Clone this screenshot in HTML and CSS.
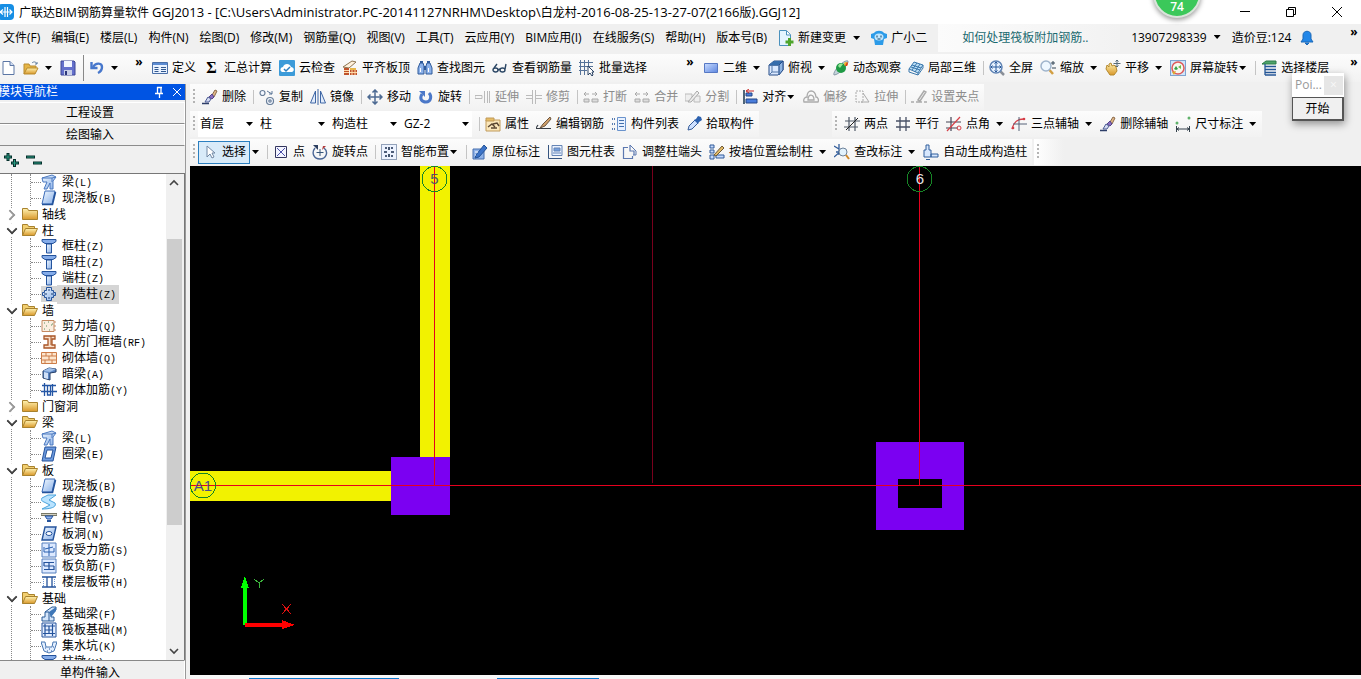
FILE: index.html
```html
<!DOCTYPE html>
<html lang="zh-CN">
<head>
<meta charset="utf-8">
<title>广联达BIM钢筋算量软件 GGJ2013</title>
<link rel="stylesheet" href="styles.css">
</head>
<body>
<svg class="defs" aria-hidden="true">
<defs>
<linearGradient id="gold" x1="0" y1="0" x2="0" y2="1"><stop offset="0" stop-color="#fff2b0"/><stop offset="1" stop-color="#d9982a"/></linearGradient>
<linearGradient id="blue" x1="0" y1="0" x2="1" y2="1"><stop offset="0" stop-color="#f4faff"/><stop offset="1" stop-color="#86aee8"/></linearGradient>
<linearGradient id="deep" x1="0" y1="0" x2="1" y2="1"><stop offset="0" stop-color="#c9dcff"/><stop offset="1" stop-color="#5d86e0"/></linearGradient>
</defs>
<symbol id="logo" viewBox="0 0 16 16"><rect width="16" height="16" rx="4" fill="#168ee4"/><path d="M7 3v10M9.500 3v10M2 8h12M5 5.500L2 8l3 2.500M11.500 5.500L14 8l-2.500 2.500" fill="none" stroke="#fff" stroke-width="1.200"/></symbol>
<symbol id="new" viewBox="0 0 16 16"><path d="M3 1.500h7l4 4v9H3z" fill="#fff" stroke="#5b76a5"/><path d="M10 1.500v4h4" fill="#cfdcf2" stroke="#5b76a5"/></symbol>
<symbol id="open" viewBox="0 0 16 16"><path d="M1 14V4h5l1 2h6v3" fill="#e6b545" stroke="#b98b2e"/><path d="M1 14l3-6h11l-3 6z" fill="url(#gold)" stroke="#b98b2e"/><path d="M9 3c2-2 4-1 5 1m0-2v2h-2" fill="none" stroke="#5f7c9c"/></symbol>
<symbol id="save" viewBox="0 0 16 16"><path d="M1 1h13l1 1v13H1z" fill="#6470cc" stroke="#3d4796"/><path d="M4 1h8v6H4z" fill="#f2f5ff"/><path d="M4 10h8v5H4z" fill="#c8cfe8"/><path d="M5 11h2v4H5z" fill="#2c367c"/></symbol>
<symbol id="undo" viewBox="0 0 16 16"><path d="M2.500 2v6h6" fill="none" stroke="#4777cc" stroke-width="2.400"/><path d="M4 7c3-5 9-4 9 0 0 3-2 5-4 6" fill="none" stroke="#4777cc" stroke-width="2.400"/></symbol>
<symbol id="define" viewBox="0 0 16 16"><path d="M.5 2.500h15v11H.5z" fill="#e9f2ff" stroke="#4a6fa8"/><path d="M1 3h14v2H1z" fill="#5b8bd2"/><path d="M2.500 7.500h4m-4 2h4m-4 2h4M9 7.500h5m-5 2h5m-5 2h5" stroke="#31588f"/></symbol>
<symbol id="cloud" viewBox="0 0 16 16"><rect width="16" height="16" rx="1" fill="#3c9bd9"/><path d="M3 12c-3-2-1-5 1-5 1-4 7-4 8 0 3 0 4 4 1 5z" fill="#fff"/><path d="M5 9l2 2 4-4" fill="none" stroke="#2b7fc0" stroke-width="1.500"/></symbol>
<symbol id="flat" viewBox="0 0 16 16"><path d="M1 7l9-6 4 1-7 6z" fill="#fff1dc" stroke="#8c7350"/><path d="M2 8h5v7H2zM8 10h7v5H8z" fill="#c0522c"/><path d="M8 8h6v2H8z" fill="#e8b64a"/><path d="M2 10.500h5m-5 2h5m1 0h7M10 10v5m3-5v5" stroke="#ffd9a8"/></symbol>
<symbol id="find" viewBox="0 0 16 16"><path d="M3 3h3l1 3v8H1V8zM10 3h3l2 5v6H9V6z" fill="#8db2ea" stroke="#2f5a9a"/><path d="M3 1h3v2H3zm7 0h3v2h-3zM7 6h2v4H7z" fill="#2f5a9a"/><path d="M3.500 8v4m8-4v4" stroke="#fff"/></symbol>
<symbol id="glasses" viewBox="0 0 16 16"><g fill="none" stroke="#2c4765" stroke-width="1.400"><ellipse cx="3.500" cy="10" rx="2.500" ry="2"/><ellipse cx="10.500" cy="10" rx="2.500" ry="2"/><path d="M6 10l2-1M2 8l3-4m8 5l1-5"/></g></symbol>
<symbol id="batch" viewBox="0 0 16 16"><path d="M1.500 0v15M5.500 0v15M9.500 0v9M0 2.500h14M0 6.500h14M0 10.500h8" stroke="#577399"/><path d="M9 6v9l2-2 2 3 1-1-1-3h2z" fill="#fff" stroke="#2b4365"/></symbol>
<symbol id="rect" viewBox="0 0 16 16"><path d="M1.500 3.500h13v9h-13z" fill="url(#deep)" stroke="#5678c4"/></symbol>
<symbol id="cube" viewBox="0 0 16 16"><path d="M1 5l5-4h9v9l-5 5H1z" fill="#dbe9ff" stroke="#244b87"/><path d="M1 5l5-4h9l-4 4z" fill="#366dac"/><path d="M11 5l4-4v9l-4 5z" fill="#8fb4e2" stroke="#244b87"/><path d="M1 5.500h10V15M4 6v6h7M4 12l-3 3" fill="none" stroke="#5377a8"/></symbol>
<symbol id="orbit" viewBox="0 0 16 16"><path d="M1 15C-1 12 11-1 15 1c1 3-9 14-14 14z" fill="#c4d4dc" stroke="#8a9ba8"/><circle cx="8" cy="8" r="5" fill="#1f9a45"/><path d="M5 6c1-3 4-3 5-2L7 8z" fill="#9be79a"/><circle cx="13" cy="4" r="2" fill="#f0b428"/><path d="M12 6l2-4 1 1-1 3z" fill="#d53c26"/></symbol>
<symbol id="part3d" viewBox="0 0 16 16"><path d="M1 9l5-7 9 3-5 8z" fill="#b9dcf4" stroke="#3a78ad"/><path d="M4 5l9 3M3 7l9 3M9 3l-5 7m8-6l-5 8M1 9v3l9 3v-2m0 2l5-7V5" fill="none" stroke="#3a78ad"/></symbol>
<symbol id="full" viewBox="0 0 16 16"><path d="M11.500 11.500L15 15" stroke="#8a8f98" stroke-width="2.500"/><circle cx="7" cy="7" r="6" fill="#eaf4ff" stroke="#5f83b4" stroke-width="1.500"/><path d="M7 2v10M2 7h10M5.500 3.500L7 2l1.500 1.500m-3 7L7 12l1.500-1.500m-5-5L2 7l1.500 1.500m7-3L12 7l-1.500 1.500" fill="none" stroke="#27589b"/></symbol>
<symbol id="zoom" viewBox="0 0 16 16"><path d="M9.500 10L13 14" stroke="#d29f43" stroke-width="2.500"/><circle cx="6" cy="6" r="5" fill="#eef7ff" stroke="#9fb4cc" stroke-width="1.500"/><path d="M13 1v4m-2-2h4m-3 5h4" stroke="#345"/></symbol>
<symbol id="pan" viewBox="0 0 16 16"><path d="M1 9l1-4 2 2V4l2-1 1 3 2-1 2 2 1 4-3 4H5z" fill="url(#gold)" stroke="#b58a30"/><path d="M12 0v7M8.500 3.500h7M10.500 1.500L12 0l1.500 1.500m-3 4L12 7l1.500-1.500" fill="none" stroke="#566b78"/></symbol>
<symbol id="screen" viewBox="0 0 16 16"><rect x=".5" y=".5" width="15" height="15" fill="#cfe6fa" stroke="#7fa3cf"/><circle cx="8" cy="8" r="6" fill="#f7f7ef" stroke="#e05a5a" stroke-width="1.500"/><path d="M4 9l2-3 2 3-2 1z" fill="#36a34a"/><path d="M8 7l3-2v4z" fill="#6bbf4a"/><path d="M2 12l4-1-2 4z" fill="#e0a828"/></symbol>
<symbol id="floors" viewBox="0 0 16 16"><path d="M1 4l4-3h10v3z" fill="#4ea36a" stroke="#2a7a4a"/><path d="M4 6.500h11M4 9.500h11M4 12.500h11M4 15h11M4 4v11" fill="none" stroke="#245696" stroke-width="1.300"/></symbol>
<symbol id="brush" viewBox="0 0 16 16"><path d="M0 14.500h7" stroke="#2d3e68" stroke-width="1.500"/><path d="M10 6l3-5 2 1-3 6z" fill="#e2b888" stroke="#8a6a4a"/><path d="M7 8l3-3 2 3-2 2z" fill="#8a6fc0" stroke="#54448a"/><path d="M3 13l3-5 3 2-2 3z" fill="#d4daf2" stroke="#4c5d94"/></symbol>
<symbol id="copy" viewBox="0 0 16 16"><g fill="#f4f8ff" stroke="#6a7f9a" stroke-width="1.200"><circle cx="3.500" cy="4" r="2.500"/><circle cx="11" cy="12" r="3.500"/><circle cx="11" cy="12" r="1.200"/></g><path d="M8 2l5 3m0-3v3h-3" fill="none" stroke="#5f7899"/></symbol>
<symbol id="mirror" viewBox="0 0 16 16"><path d="M5.500 2v12h-5zM10.500 2v12h5z" fill="#e2ecfb" stroke="#3f67a5"/><path d="M8 0v16" stroke="#3f67a5"/></symbol>
<symbol id="move" viewBox="0 0 16 16"><path d="M8 1v14M1 8h14M5.500 3.500L8 1l2.500 2.500m-5 9L8 15l2.500-2.500m-7-7L1 8l2.500 2.500m9-5L15 8l-2.500 2.500" fill="none" stroke="#4d6a92" stroke-width="1.500"/></symbol>
<symbol id="rotate" viewBox="0 0 16 16"><path d="M4 5c-3 5 0 8 4 8 5 0 6-6 3-9" fill="none" stroke="#4b78c8" stroke-width="3"/><path d="M1 2h6v6z" fill="#4b78c8"/></symbol>
<symbol id="extend" viewBox="0 0 16 16"><path d="M0 6.500h7v3H0zM9.500 2v12m3-12v12M14.500 2v12" fill="none" stroke="#bbb"/></symbol>
<symbol id="trim" viewBox="0 0 16 16"><path d="M0 6.500h6m4 0h6M0 9.500h6m4 0h6M6.500 1v14M9.500 1v14" stroke="#bbb"/></symbol>
<symbol id="split" viewBox="0 0 16 16"><path d="M1 10h5v3H1zm8 0h6v3H9z" fill="#ddd" stroke="#aaa"/><path d="M1 5h5M9 5h5M3 3L1 5l2 2m9-4l2 2-2 2" fill="none" stroke="#aaa"/></symbol>
<symbol id="cut" viewBox="0 0 16 16"><path d="M0 5h7v7H0zm9 2h6v6H9z" fill="#eee" stroke="#bbb"/><path d="M3 13l9-11 2 2-8 9z" fill="#eee" stroke="#aaa"/></symbol>
<symbol id="align" viewBox="0 0 16 16"><path d="M2 1v14" stroke="#18344e" stroke-width="1.500"/><path d="M4 4h6v3H4zM4 10h11v4H4z" fill="#4a7ddb" stroke="#244786"/><path d="M5 2h7M7 0L4 2l3 2" fill="none" stroke="#c72929"/></symbol>
<symbol id="offset" viewBox="0 0 16 16"><path d="M1 13c-1-3 1-5 3-5 0-8 8-8 9 0 2 0 3 3 2 5zM5 11c0-7 6-6 6 0z" fill="none" stroke="#aaa" stroke-width="1.300"/></symbol>
<symbol id="stretch" viewBox="0 0 16 16"><path d="M2 2h7v11H2z" fill="none" stroke="#aaa" stroke-dasharray="2 1"/><path d="M7 13h8L9 4" fill="none" stroke="#aaa"/></symbol>
<symbol id="grippt" viewBox="0 0 16 16"><path d="M7 11l6-9 2 1-6 9zM0 13h3m2 0h6m2 0h3" fill="none" stroke="#aaa" stroke-width="1.500"/></symbol>
<symbol id="prop" viewBox="0 0 16 16"><path d="M1 4h14v11H1z" fill="#fae6ba" stroke="#c09a5a"/><path d="M1 2h8v3H1z" fill="#e7bd65" stroke="#c09a5a"/><path d="M3 11l4-3 3 3m-2-3l4-1 2 3M6 12h6" fill="none" stroke="#5a4632" stroke-width="1.400"/></symbol>
<symbol id="rebar" viewBox="0 0 16 16"><path d="M0 12.500h15M0 12l2-3" stroke="#363c45" stroke-width="1.200"/><path d="M4 12l3-4 7-7 1 2-6 7z" fill="#d0a06a" stroke="#6b5540"/></symbol>
<symbol id="list" viewBox="0 0 16 16"><path d="M1 3h3M1 8h3m-3 5h3" stroke="#577bb0" stroke-width="2" stroke-dasharray="1 1"/><path d="M6.500 1.500h8v13h-8z" fill="#e8f1ff" stroke="#6a93cc"/><path d="M8 4.500h5m-5 3h5m-5 3h5" stroke="#4270ad"/></symbol>
<symbol id="pick" viewBox="0 0 16 16"><path d="M2 14l1-4 6-6 3 3-6 6z" fill="#cfe1ff" stroke="#365d9a"/><path d="M8 4l2-1 2-3 3 1 1 3-3 2-1 2z" fill="#2c61af"/></symbol>
<symbol id="twopt" viewBox="0 0 16 16"><path d="M1 5h15M0 11h14M5 1v14M11 1v14" stroke="#4f5967" stroke-width="1.200"/><path d="M2 14L14 2" stroke="#222"/></symbol>
<symbol id="parallel" viewBox="0 0 16 16"><path d="M1 5h14M1 11h14M5 1v14M11 1v14" stroke="#485065" stroke-width="1.300"/></symbol>
<symbol id="angle" viewBox="0 0 16 16"><path d="M0 6h15M0 12h12M5 1v14" stroke="#445" stroke-width="1.200"/><path d="M1 15L14 1" stroke="#d64149" stroke-width="1.200"/><circle cx="13" cy="12" r="2" fill="none" stroke="#d64149"/></symbol>
<symbol id="three" viewBox="0 0 16 16"><path d="M1 13C3 6 6 3 13 3" fill="none" stroke="#d53d46" stroke-width="1.300"/><path d="M8 1v14M2 8h14" stroke="#566279"/><circle cx="13" cy="3" r="1.300" fill="#d53d46"/><circle cx="2" cy="12" r="1.300" fill="#d53d46"/></symbol>
<symbol id="dimension" viewBox="0 0 16 16"><path d="M1.500 10v6m13-6v6M2 13h12M4 11.500L2 13l2 1.500m8-3l2 1.500-2 1.500" fill="none" stroke="#34414c"/><circle cx="2" cy="7" r="1.500" fill="#5fb26a"/><circle cx="14" cy="2" r="1.500" fill="#5fb26a"/></symbol>
<symbol id="cursor" viewBox="0 0 16 16"><path d="M5 2v11l3-3 2 4 2-1-2-4h3z" fill="#fff" stroke="#7087a4"/></symbol>
<symbol id="point" viewBox="0 0 16 16"><path d="M2.500 2.500h11v11h-11z" fill="#f3f4ff" stroke="#34365e"/><path d="M4 4l8 8m0-8l-8 8" stroke="#4a4fa8"/></symbol>
<symbol id="rotpt" viewBox="0 0 16 16"><path d="M3 4c-4 5-1 11 5 11s9-7 4-11" fill="none" stroke="#4a6696" stroke-width="1.400"/><path d="M1 1h5v5z" fill="#2c3f60"/><path d="M8 5v7M4.500 8.500h7" stroke="#365579"/><path d="M10 6l1-4h3z" fill="#b03a3a"/></symbol>
<symbol id="smart" viewBox="0 0 16 16"><path d="M.5.500h15v15H.5z" fill="#edf3ff" stroke="#334f79" stroke-dasharray="1 1"/><path d="M8 3v3m0 4v3M3 8h3m4 0h3M4 4h2m4 0h2m-8 8h2m4 0h2" stroke="#182d4d" stroke-width="1.600"/></symbol>
<symbol id="inplace" viewBox="0 0 16 16"><path d="M1 5h11v10H1z" fill="#8fb2e8" stroke="#466fae"/><path d="M4 11l8-10 3 3-8 9-4 1z" fill="#3d74c8" stroke="#255497"/><path d="M3 8h3m-3 3h1" stroke="#fff"/></symbol>
<symbol id="coltable" viewBox="0 0 16 16"><path d="M1.500 1v13.500H15" fill="none" stroke="#36547f"/><path d="M5 1.500h10v10H5z" fill="#eaf2ff" stroke="#6685b5"/><path d="M7 4h6v3H7zm-1 5h8" fill="#759fdd" stroke="#6685b5"/></symbol>
<symbol id="adjust" viewBox="0 0 16 16"><path d="M6 3.500H1.500v11h9V12M8 1v6h4v4" fill="none" stroke="#5c78b0" stroke-width="1.200"/><path d="M8 1l6 6v4h-3" fill="none" stroke="#5c78b0"/></symbol>
<symbol id="wallcol" viewBox="0 0 16 16"><path d="M1 1h4v3H1zm0 5h4v3H1zm0 5h4v4H1zm6 0h8v3H7z" fill="#c5dafd" stroke="#315b99"/><path d="M5 11l8-9 2 2-8 8z" fill="#e4bc67" stroke="#6d5938"/></symbol>
<symbol id="checkmark" viewBox="0 0 16 16"><path d="M0 2l5 3M0 13l7-6M5 0v11M2 8h7" stroke="#315c9a" stroke-width="1.300"/><circle cx="9" cy="8" r="4" fill="#e2f2fd" stroke="#6c8199"/><path d="M12 11l3 4" stroke="#d0892b" stroke-width="2"/></symbol>
<symbol id="auto" viewBox="0 0 16 16"><path d="M3 1h3v5h2v7H1V6h2zM8 10h7v3H8z" fill="#d7e7fd" stroke="#315f9c"/><path d="M3 15.500h4" stroke="#315f9c"/></symbol>
<symbol id="change" viewBox="0 0 16 16"><path d="M1.500 .5h7l4 4v11h-11z" fill="#e4f5ff" stroke="#4b91bd"/><path d="M8.500 1v4h4" fill="#fff" stroke="#4b91bd"/><path d="M11.500 8v8m-4-4h8" stroke="#4ea52c" stroke-width="3"/></symbol>
<symbol id="mascot" viewBox="0 0 16 16"><path d="M3 3c2-3 8-3 10 0l3 1v4l-3 1-1 6H4L3 9 0 8V4z" fill="#2c9be8"/><ellipse cx="8" cy="7" rx="4.500" ry="3.500" fill="#bfe6ff"/><path d="M6 5.500v2m4-2v2M6.500 9h3" stroke="#174565"/></symbol>
<symbol id="bell" viewBox="0 0 16 16"><path d="M2 12l2-3V5c0-5 8-5 8 0v4l2 3zM6 13h4l-2 2z" fill="#2186e8" stroke="#1b68b8"/></symbol>
<symbol id="folder" viewBox="0 0 16 16"><path d="M.5 13.500v-11h5l1 2h9v9z" fill="url(#gold)" stroke="#a8822e"/></symbol>
<symbol id="folder-open" viewBox="0 0 16 16"><path d="M.5 13.500v-11h5l1 2h6v3" fill="#f2cf70" stroke="#a8822e"/><path d="M.5 13.500l3-7h12l-3 7z" fill="url(#gold)" stroke="#a8822e"/></symbol>
<symbol id="t-beam" viewBox="0 0 16 16"><path d="M1 4l10-3 4 2-3 4v8H9V9l-3 6H3l3-7H2z" fill="url(#blue)" stroke="#4a79c0"/><path d="M1 4h10l4-1M11 4v4" fill="none" stroke="#4a79c0"/></symbol>
<symbol id="t-slab" viewBox="0 0 16 16"><path d="M4 1h10l-3 13H1z" fill="url(#blue)" stroke="#3c6cb8"/><path d="M1 14.500h10.500L14.500 2" fill="none" stroke="#24539c" stroke-width="1.600"/></symbol>
<symbol id="t-column" viewBox="0 0 16 16"><path d="M1 1.500h14v2l-3 2H4l-3-2z" fill="#85ace9" stroke="#24539c"/><path d="M5.500 6h5v9h-5z" fill="url(#blue)" stroke="#24539c"/></symbol>
<symbol id="t-struct" viewBox="0 0 16 16"><path d="M5.500 1.500h5v3h2v2h2v3h-2v2h-2v3h-5v-3h-2v-2h-2v-3h2v-2h2z" fill="url(#blue)" stroke="#24539c"/><path d="M3 8h3m4 0h3M8 3v2m0 6v2" stroke="#183b70"/></symbol>
<symbol id="t-shear" viewBox="0 0 16 16"><path d="M1 2.500h12v11H1zM13 4h2m-2 4h2m-2 4h2" fill="#fbeee0" stroke="#c58a62"/><path d="M3 5h1m3-1h1m3 2h1M5 8h1m4-1h1M3 11h1m4 1h1" stroke="#5f8f60"/></symbol>
<symbol id="t-door" viewBox="0 0 16 16"><path d="M3 2h11v3h-3v6h3v3H3v-3h4V5H3z" fill="#f8dfca" stroke="#a95627" stroke-width="1.300"/><path d="M10 2v9" stroke="#a95627"/></symbol>
<symbol id="t-brick" viewBox="0 0 16 16"><path d="M.5 2.500h15v11H.5z" fill="#fde6ce" stroke="#cc7d48"/><path d="M1 6h14M1 10h14M5 2v4m6-4v4M8 6v4m-4 0v4m7-4v4" stroke="#cc7d48"/></symbol>
<symbol id="t-dark" viewBox="0 0 16 16"><path d="M2 5l6-3 7 1v3l-6 1v7l-7-2z" fill="#5c86c4" stroke="#233e69"/><path d="M3 6l4 1v6l-4-1z" fill="#cfe0f7"/><path d="M2 5l6-3 7 1-6 3z" fill="#9fbfe9"/></symbol>
<symbol id="t-mesh" viewBox="0 0 16 16"><path d="M1 3.500h14M0 9.500h16M3.500 1v13M11.500 2v12M6.500 4v9h3V4" fill="none" stroke="#2456a5" stroke-width="1.300"/></symbol>
<symbol id="t-ring" viewBox="0 0 16 16"><path fill-rule="evenodd" d="M4 1h11l-3 14H1zM6 4L4 12h6l2-8z" fill="#6e9bdf" stroke="#24539c"/></symbol>
<symbol id="t-spiral" viewBox="0 0 16 16"><path d="M1 4l6-3h8L8 6l6 3c2 4-4 6-13 6l8-4-6-3C0 7 0 5 1 4z" fill="#b9e3ff" stroke="#4ba3dc"/></symbol>
<symbol id="t-cap" viewBox="0 0 16 16"><path d="M0 3.500h16v2H0z" fill="#d4d1c0" stroke="#776"/><path d="M4 6h8l-2 3H6z" fill="#8cb1ef" stroke="#24539c"/><path d="M6 10h4v2H6z" fill="#24539c"/></symbol>
<symbol id="t-hole" viewBox="0 0 16 16"><path d="M4 1h11l-3 13H1z" fill="url(#blue)" stroke="#24539c" stroke-width="1.400"/><ellipse cx="8" cy="7.500" rx="3" ry="2" fill="#fff" stroke="#24539c"/></symbol>
<symbol id="t-force" viewBox="0 0 16 16"><path d="M1 1h14v14H1z" fill="#dce9ff" stroke="#557fbd"/><path d="M3 5v5h10V6M8 2v12M4 7l8-2" fill="none" stroke="#285fae"/></symbol>
<symbol id="t-neg" viewBox="0 0 16 16"><path d="M1 1h14v14H1z" fill="#dce9ff" stroke="#557fbd"/><path d="M3 4.500h10M3 11.500h10M8 4v8M3 8h10M3 4v4m10 0v4" fill="none" stroke="#24539c" stroke-width="1.200"/></symbol>
<symbol id="t-strip" viewBox="0 0 16 16"><path d="M1 3h14M1 13h14M6 3v10m5-10v10" stroke="#24539c" stroke-width="1.300"/><path d="M2.500 5v7m11-7v7" stroke="#7198d2" stroke-dasharray="1 1"/></symbol>
<symbol id="t-fbeam" viewBox="0 0 16 16"><path d="M1 15v-4h3V6l7-5h4v3l-5 4v3h3v4z" fill="#d5e6fb" stroke="#285a97"/><path d="M8 6l7-5v4l-5 6" fill="#3e77b8"/><path d="M4 6h4v9" fill="none" stroke="#285a97"/></symbol>
<symbol id="t-raft" viewBox="0 0 16 16"><path d="M1 1h14v14H1z" fill="#e5efff" stroke="#24539c"/><path d="M4 2v12m7.500-12v12M2 4h12M2 11.500h12M8 4v8M4 8h8" stroke="#24539c" stroke-width="1.200"/></symbol>
<symbol id="t-pit" viewBox="0 0 16 16"><path d="M0 4h4l1 5h6l1-5h4l-3 9-5 2-5-2z" fill="#e3efff" stroke="#4776b1"/><path d="M4 10h1m3 1h1m3-2h1m-7 4h1m3 0h1" stroke="#24539c"/></symbol>
</svg>

<header class="titlebar">
  <svg class="icon logo"><use href="#logo"/></svg>
  <h1>广联达BIM钢筋算量软件 <span class="path">GGJ2013 - [C:\Users\Administrator.PC-20141127NRHM\Desktop\</span>白龙村<span class="path">-2016-08-25-13-27-07(2166</span>版<span class="path">).GGJ12]</span></h1>
  <div class="score">74</div>
  <div class="controls">
    <button aria-label="最小化"><svg class="icon" viewBox="0 0 16 16"><path d="M3 7.500h10" stroke="#000"/></svg></button>
    <button aria-label="还原"><svg class="icon" viewBox="0 0 16 16"><path d="M3.500 5.500h7v7h-7zM5.500 5V3.500h7v7H11" fill="none" stroke="#000"/></svg></button>
    <button aria-label="关闭"><svg class="icon" viewBox="0 0 16 16"><path d="M3 3l10 10M13 3L3 13" stroke="#000"/></svg></button>
  </div>
</header>

<nav class="menubar">
  <button>文件(F)</button><button>编辑(E)</button><button>楼层(L)</button><button>构件(N)</button><button>绘图(D)</button><button>修改(M)</button><button>钢筋量(Q)</button><button>视图(V)</button><button>工具(T)</button><button>云应用(Y)</button><button>BIM应用(I)</button><button>在线服务(S)</button><button>帮助(H)</button><button>版本号(B)</button>
  <button class="tool split"><svg class="icon"><use href="#change"/></svg>新建变更</button>
  <button class="tool"><svg class="icon"><use href="#mascot"/></svg>广小二</button>
  <div class="tip"><a href="#">如何处理筏板附加钢筋..</a></div>
  <div class="account"><button class="split">13907298339</button><button>造价豆:124</button><button aria-label="消息"><svg class="icon"><use href="#bell"/></svg></button></div>
  <button class="more">»</button>
</nav>

<div class="mainbar">
  <div class="panel files">
    <button class="tool" aria-label="新建"><svg class="icon"><use href="#new"/></svg></button>
    <button class="tool split" aria-label="打开"><svg class="icon"><use href="#open"/></svg></button>
    <button class="tool" aria-label="保存"><svg class="icon"><use href="#save"/></svg></button>
    <i class="sep dark"></i>
    <button class="tool split" aria-label="撤销"><svg class="icon"><use href="#undo"/></svg></button>
    <button class="more">»</button>
  </div>
  <div class="panel common">
    <button class="tool"><svg class="icon"><use href="#define"/></svg>定义</button>
    <button class="tool"><span class="sigma">Σ</span>汇总计算</button>
    <button class="tool"><svg class="icon"><use href="#cloud"/></svg>云检查</button>
    <button class="tool"><svg class="icon"><use href="#flat"/></svg>平齐板顶</button>
    <button class="tool"><svg class="icon"><use href="#find"/></svg>查找图元</button>
    <button class="tool"><svg class="icon"><use href="#glasses"/></svg>查看钢筋量</button>
    <button class="tool"><svg class="icon"><use href="#batch"/></svg>批量选择</button>
    <button class="more">»</button>
  </div>
  <div class="panel views">
    <button class="tool split"><svg class="icon"><use href="#rect"/></svg>二维</button>
    <button class="tool split"><svg class="icon"><use href="#cube"/></svg>俯视</button>
    <button class="tool"><svg class="icon"><use href="#orbit"/></svg>动态观察</button>
    <button class="tool"><svg class="icon"><use href="#part3d"/></svg>局部三维</button>
    <i class="sep"></i>
    <button class="tool"><svg class="icon"><use href="#full"/></svg>全屏</button>
    <button class="tool split"><svg class="icon"><use href="#zoom"/></svg>缩放</button>
    <button class="tool split"><svg class="icon"><use href="#pan"/></svg>平移</button>
    <button class="tool drop"><svg class="icon"><use href="#screen"/></svg>屏幕旋转</button>
    <i class="sep"></i>
    <button class="tool"><svg class="icon"><use href="#floors"/></svg>选择楼层</button>
    <button class="more">»</button>
  </div>
</div>

<div class="workspace">
  <aside class="sidebar">
    <div class="side-title"><span>模块导航栏</span>
      <button aria-label="固定"><svg class="icon" viewBox="0 0 16 16"><path d="M6 3.500h5M6.500 3v6M10 3v6M4 9.500h8M8.500 9v5" stroke="#fff" stroke-width="1.300"/></svg></button>
      <button aria-label="关闭导航"><svg class="icon" viewBox="0 0 16 16"><path d="M4 4l8 8m0-8l-8 8" stroke="#fff"/></svg></button>
    </div>
    <button class="side-tab">工程设置</button>
    <button class="side-tab">绘图输入</button>
    <div class="side-tools">
      <button aria-label="全部展开"><svg class="icon" viewBox="0 0 16 16"><path d="M5 1v8M1 5h8M11.500 7v8M8 11h8" stroke="#042f2b" stroke-width="3"/><path d="M5 2v6M2 5h6M11.500 8v6M9 11h6" stroke="#289b82"/></svg></button>
      <button aria-label="全部折叠"><svg class="icon" viewBox="0 0 16 16"><path d="M0 5h9M7 11h9" stroke="#042f2b" stroke-width="3"/><path d="M1 5h7m0 6h7" stroke="#289b82"/></svg></button>
    </div>
    <div class="tree-box">
      <ul class="tree">
        <li><ul>
          <li><svg class="icon"><use href="#t-beam"/></svg><span>梁<kbd>(L)</kbd></span></li>
          <li><svg class="icon"><use href="#t-slab"/></svg><span>现浇板<kbd>(B)</kbd></span></li>
        </ul></li>
        <li><div class="node closed"><svg class="icon"><use href="#folder"/></svg>轴线</div></li>
        <li><div class="node"><svg class="icon"><use href="#folder-open"/></svg>柱</div><ul>
          <li><svg class="icon"><use href="#t-column"/></svg><span>框柱<kbd>(Z)</kbd></span></li>
          <li><svg class="icon"><use href="#t-column"/></svg><span>暗柱<kbd>(Z)</kbd></span></li>
          <li><svg class="icon"><use href="#t-column"/></svg><span>端柱<kbd>(Z)</kbd></span></li>
          <li class="current"><svg class="icon"><use href="#t-struct"/></svg><span>构造柱<kbd>(Z)</kbd></span></li>
        </ul></li>
        <li><div class="node"><svg class="icon"><use href="#folder-open"/></svg>墙</div><ul>
          <li><svg class="icon"><use href="#t-shear"/></svg><span>剪力墙<kbd>(Q)</kbd></span></li>
          <li><svg class="icon"><use href="#t-door"/></svg><span>人防门框墙<kbd>(RF)</kbd></span></li>
          <li><svg class="icon"><use href="#t-brick"/></svg><span>砌体墙<kbd>(Q)</kbd></span></li>
          <li><svg class="icon"><use href="#t-dark"/></svg><span>暗梁<kbd>(A)</kbd></span></li>
          <li><svg class="icon"><use href="#t-mesh"/></svg><span>砌体加筋<kbd>(Y)</kbd></span></li>
        </ul></li>
        <li><div class="node closed"><svg class="icon"><use href="#folder"/></svg>门窗洞</div></li>
        <li><div class="node"><svg class="icon"><use href="#folder-open"/></svg>梁</div><ul>
          <li><svg class="icon"><use href="#t-beam"/></svg><span>梁<kbd>(L)</kbd></span></li>
          <li><svg class="icon"><use href="#t-ring"/></svg><span>圈梁<kbd>(E)</kbd></span></li>
        </ul></li>
        <li><div class="node"><svg class="icon"><use href="#folder-open"/></svg>板</div><ul>
          <li><svg class="icon"><use href="#t-slab"/></svg><span>现浇板<kbd>(B)</kbd></span></li>
          <li><svg class="icon"><use href="#t-spiral"/></svg><span>螺旋板<kbd>(B)</kbd></span></li>
          <li><svg class="icon"><use href="#t-cap"/></svg><span>柱帽<kbd>(V)</kbd></span></li>
          <li><svg class="icon"><use href="#t-hole"/></svg><span>板洞<kbd>(N)</kbd></span></li>
          <li><svg class="icon"><use href="#t-force"/></svg><span>板受力筋<kbd>(S)</kbd></span></li>
          <li><svg class="icon"><use href="#t-neg"/></svg><span>板负筋<kbd>(F)</kbd></span></li>
          <li><svg class="icon"><use href="#t-strip"/></svg><span>楼层板带<kbd>(H)</kbd></span></li>
        </ul></li>
        <li><div class="node"><svg class="icon"><use href="#folder-open"/></svg>基础</div><ul>
          <li><svg class="icon"><use href="#t-fbeam"/></svg><span>基础梁<kbd>(F)</kbd></span></li>
          <li><svg class="icon"><use href="#t-raft"/></svg><span>筏板基础<kbd>(M)</kbd></span></li>
          <li><svg class="icon"><use href="#t-pit"/></svg><span>集水坑<kbd>(K)</kbd></span></li>
          <li><svg class="icon"><use href="#t-column"/></svg><span>柱墩<kbd>(Y)</kbd></span></li>
        </ul></li>
      </ul>
      <div class="scroll">
        <svg class="icon" viewBox="0 0 16 16"><path d="M4 10l4-4 4 4" fill="none" stroke="#444" stroke-width="1.600"/></svg>
        <div class="thumb"></div>
        <svg class="icon" viewBox="0 0 16 16"><path d="M4 6l4 4 4-4" fill="none" stroke="#444" stroke-width="1.600"/></svg>
      </div>
    </div>
    <button class="side-tab last">单构件输入</button>
  </aside>

  <main class="editor">
    <div class="row">
      <div class="panel">
        <i class="grip"></i>
        <button class="tool"><svg class="icon"><use href="#brush"/></svg>删除</button>
        <i class="sep"></i>
        <button class="tool"><svg class="icon"><use href="#copy"/></svg>复制</button>
        <button class="tool"><svg class="icon"><use href="#mirror"/></svg>镜像</button>
        <i class="sep"></i>
        <button class="tool"><svg class="icon"><use href="#move"/></svg>移动</button>
        <button class="tool"><svg class="icon"><use href="#rotate"/></svg>旋转</button>
        <i class="sep"></i>
        <button class="tool" disabled><svg class="icon"><use href="#extend"/></svg>延伸</button>
        <button class="tool" disabled><svg class="icon"><use href="#trim"/></svg>修剪</button>
        <i class="sep"></i>
        <button class="tool" disabled><svg class="icon"><use href="#split"/></svg>打断</button>
        <button class="tool" disabled><svg class="icon"><use href="#split"/></svg>合并</button>
        <button class="tool" disabled><svg class="icon"><use href="#cut"/></svg>分割</button>
        <i class="sep"></i>
        <button class="tool drop"><svg class="icon"><use href="#align"/></svg>对齐</button>
        <button class="tool" disabled><svg class="icon"><use href="#offset"/></svg>偏移</button>
        <button class="tool" disabled><svg class="icon"><use href="#stretch"/></svg>拉伸</button>
        <i class="sep"></i>
        <button class="tool" disabled><svg class="icon"><use href="#grippt"/></svg>设置夹点</button>
      </div>
    </div>
    <div class="row">
      <div class="panel">
        <i class="grip"></i>
        <div class="combos">
          <label class="combo floor"><select aria-label="楼层"><option>首层</option></select></label>
          <label class="combo"><select aria-label="构件类别"><option>柱</option></select></label>
          <label class="combo"><select aria-label="构件类型"><option>构造柱</option></select></label>
          <label class="combo"><select aria-label="构件名称"><option>GZ-2</option></select></label>
        </div>
        <i class="sep"></i>
        <button class="tool"><svg class="icon"><use href="#prop"/></svg>属性</button>
        <button class="tool"><svg class="icon"><use href="#rebar"/></svg>编辑钢筋</button>
        <button class="tool"><svg class="icon"><use href="#list"/></svg>构件列表</button>
        <button class="tool"><svg class="icon"><use href="#pick"/></svg>拾取构件</button>
      </div>
      <div class="panel axes">
        <i class="grip"></i>
        <button class="tool"><svg class="icon"><use href="#twopt"/></svg>两点</button>
        <button class="tool"><svg class="icon"><use href="#parallel"/></svg>平行</button>
        <button class="tool split"><svg class="icon"><use href="#angle"/></svg>点角</button>
        <button class="tool split"><svg class="icon"><use href="#three"/></svg>三点辅轴</button>
        <button class="tool"><svg class="icon"><use href="#brush"/></svg>删除辅轴</button>
        <button class="tool split"><svg class="icon"><use href="#dimension"/></svg>尺寸标注</button>
      </div>
    </div>
    <div class="row">
      <div class="panel">
        <i class="grip"></i>
        <button class="tool split picked"><span class="face"><svg class="icon"><use href="#cursor"/></svg>选择</span></button>
        <i class="sep"></i>
        <button class="tool"><svg class="icon"><use href="#point"/></svg>点</button>
        <button class="tool"><svg class="icon"><use href="#rotpt"/></svg>旋转点</button>
        <i class="sep"></i>
        <button class="tool drop"><svg class="icon"><use href="#smart"/></svg>智能布置</button>
        <i class="sep"></i>
        <button class="tool"><svg class="icon"><use href="#inplace"/></svg>原位标注</button>
        <button class="tool"><svg class="icon"><use href="#coltable"/></svg>图元柱表</button>
        <button class="tool"><svg class="icon"><use href="#adjust"/></svg>调整柱端头</button>
        <button class="tool split"><svg class="icon"><use href="#wallcol"/></svg>按墙位置绘制柱</button>
        <button class="tool split"><svg class="icon"><use href="#checkmark"/></svg>查改标注</button>
        <button class="tool"><svg class="icon"><use href="#auto"/></svg>自动生成构造柱</button>
      </div>
      <div class="panel stub"><i class="grip"></i></div>
    </div>
    <svg class="canvas" role="img" aria-label="柱平面图">
      <rect x="230" y="0" width="30" height="292" fill="#f2f200"/>
      <rect x="0" y="305" width="201" height="30" fill="#f2f200"/>
      <rect x="201" y="291" width="59" height="58" fill="#7b00f2"/>
      <path fill-rule="evenodd" d="M686 276h88v88h-88zM708 313v29h44v-29z" fill="#7b00f2"/>
      <g fill="#e6001e">
        <rect x="0" y="319" width="100%" height="1"/>
        <rect x="244" y="0" width="1" height="319"/>
        <rect x="729" y="0" width="1" height="319"/>
        <rect x="462" y="0" width="1" height="317" fill="#78001c"/>
      </g>
      <g fill="none" stroke="#168526"><circle cx="244.500" cy="13" r="12.500"/><circle cx="729.500" cy="13" r="12.500"/><circle cx="13" cy="319.500" r="12.500"/></g>
      <g class="marks"><text x="244.500" y="18" fill="#4d5868">5</text><text x="730" y="18" fill="#e4e4e4">6</text><text x="13" y="325" fill="#4b4b8c">A1</text></g>
      <path d="M53 459V422h-2l4-12 4 12h-2v37z" fill="#0f0"/>
      <path d="M55 457h37v-3l13 5-13 4v-2H55z" fill="red"/>
      <path d="M64 413l5 4 5-4m-5 4v5" fill="none" stroke="#3db53d"/>
      <path d="M92 438l9 10m0-10l-9 10" stroke="#d11"/>
    </svg>
    <div class="dock"><i></i><i></i></div>
  </main>
</div>

<section class="float">
  <header><span>Poi...</span><button aria-label="关闭浮窗">×</button></header>
  <button class="start">开始</button>
</section>
</body>
</html>
```
FILE: styles.css
```css
* { box-sizing: border-box; }
body {
  margin: 0;
  height: 100vh;
  display: flex;
  flex-direction: column;
  overflow: hidden;
  background: #f0f0f0;
  color: #000;
  font: 12px/16px "Open Sans", "Noto Sans CJK SC", sans-serif;
}
button {
  font: inherit;
  color: inherit;
  background: none;
  border: 0;
  padding: 0;
  white-space: nowrap;
  flex: none;
}
.defs { position: absolute; width: 0; height: 0; }
.icon { width: 16px; height: 16px; flex: none; display: block; }

/* title bar */
.titlebar {
  display: flex;
  align-items: center;
  height: 24px;
  flex: none;
  background: #fff;
}
.titlebar h1 { margin: 0 0 0 5px; font: inherit; white-space: nowrap; flex: 1; }
.path { font-size: 13px; }
.logo { margin-left: -2px; }
.controls { display: flex; gap: 30px; padding-right: 16px; height: 20px; align-items: center; }
.score {
  position: absolute;
  top: -30px;
  right: 160px;
  width: 48px;
  height: 48px;
  padding-top: 27px;
  border: 2px solid #d9e4da;
  border-radius: 50%;
  background: #3bc85a;
  box-shadow: 0 2px 5px #0006;
  color: #fff;
  font-weight: 600;
  text-align: center;
}

/* menu bar */
.menubar {
  display: flex;
  align-items: center;
  gap: 11px;
  height: 28px;
  flex: none;
  padding-left: 3px;
}
.tip {
  width: 182px;
  height: 28px;
  line-height: 28px;
  padding-left: 24px;
  background: linear-gradient(90deg, #fbfbfb, #f2f2f2);
}
.tip a { color: #1b6a70; text-decoration: none; }
.account { display: flex; align-items: center; gap: 8px; flex: 1; }
.more { align-self: flex-start; width: 14px; margin-left: auto; font-weight: 700; }

/* tool buttons */
.tool { display: flex; align-items: center; gap: 4px; height: 24px; }
.tool:disabled { color: #8c8c8c; }
.split::after, .drop::after, .combo::after {
  content: "";
  display: inline-block;
  flex: none;
  width: 7px;
  height: 4px;
  background: #000;
  clip-path: polygon(0 0, 100% 0, 50% 100%);
}
.split::after { margin: 0 1px 0 2px; }
.menubar .split::after { margin: 0 0 0 3px; }
.account .split::after { margin: 0 3px 3px 7px; }
.drop::after { margin: 0 2px 0 -3px; }
.sep { width: 1px; height: 14px; margin-right: -2px; background: #c4c4c4; flex: none; }
.sep.dark { height: 26px; background: #888; }
.sigma { width: 17px; font: bold 16px/16px "Liberation Serif", serif; text-align: center; }
.grip {
  width: 2px;
  height: 16px;
  flex: none;
  background: repeating-linear-gradient(#b4b4b4 0 2px, transparent 2px 4px);
}
.panel {
  display: flex;
  align-items: center;
  gap: 7px;
  height: 26px;
  background: linear-gradient(#fcfcfc, #f2f2f2);
}

/* main bar */
.mainbar { display: flex; height: 32px; padding-top: 2px; flex: none; }
.mainbar .panel { height: 28px; }
.files { width: 146px; }
.files .panel { gap: 6px; }
.common { width: 551px; padding-left: 6px; }
.views { flex: 1; padding-left: 6px; }

/* navigation panel */
.workspace { display: flex; flex: 1; min-height: 0; }
.sidebar {
  width: 186px;
  display: flex;
  flex-direction: column;
  flex: none;
  border-right: 1px solid #999;
}
.side-title {
  display: flex;
  align-items: center;
  height: 16px;
  margin-bottom: 2px;
  background: #0054e3;
  color: #fff;
  overflow: hidden;
  gap: 2px;
}
.side-title span { flex: 1; margin-left: -2px; white-space: nowrap; }
.side-tab {
  height: 22px;
  padding-right: 4px;
  border: 1px solid #fff;
  border-bottom-color: #8c8c8c;
  border-left: 0;
  background: #f0f0f0;
}
.side-tab.last { height: 19px; border-top-color: #888; border-bottom: 0; padding-top: 4px; }
.side-tools { display: flex; align-items: center; gap: 7px; height: 27px; padding-left: 3px; }
.tree-box {
  display: flex;
  flex: 1;
  min-height: 0;
  overflow: hidden;
  background: #fff;
  border: solid #777;
  border-width: 1px 1px 0 0;
}
.tree, .tree ul { list-style: none; margin: 0; padding: 0; }
.tree {
  flex: 1;
  position: relative;
  font-family: "Noto Sans CJK SC", sans-serif;
  white-space: nowrap;
}
.tree::before {
  content: "";
  position: absolute;
  top: 0;
  bottom: 0;
  left: 11px;
  border-left: 1px dotted #888;
}
.node {
  position: relative;
  display: flex;
  align-items: center;
  gap: 4px;
  height: 16px;
  padding-left: 22px;
}
.node::before {
  content: "";
  position: absolute;
  left: 8px;
  top: 3px;
  width: 6px;
  height: 6px;
  border: solid #444;
  border-width: 0 2px 2px 0;
  transform: rotate(45deg);
  outline: 2px solid #fff;
  background: #fff;
}
.node.closed::before { left: 6px; top: 5px; transform: rotate(-45deg); border-color: #999; }
.tree ul { margin-left: 30px; border-left: 1px dotted #888; }
.tree ul li { display: flex; align-items: center; height: 16px; }
.tree ul li::before { content: ""; width: 10px; border-top: 1px dotted #888; }
.tree ul li > span { padding: 0 3px 0 5px; }
.tree .current .icon, .tree .current span { background: #d5d5d5; }
.tree kbd { font: 10px/16px "Liberation Mono", monospace; }
.scroll {
  display: flex;
  flex-direction: column;
  align-items: center;
  width: 18px;
  flex: none;
  background: #f0f0f0;
  padding: 1px 2px 1px 0;
}
.thumb { width: 15px; height: 59%; margin: 48px 0 auto; background: #cdcdcd; }

/* editor */
.editor { flex: 1; min-width: 0; display: flex; flex-direction: column; margin-left: 4px; }
.row { display: flex; align-items: flex-end; height: 27px; flex: none; }
.row:first-child { height: 26px; }
.row:nth-child(3) { height: 29px; padding-bottom: 1px; }
.row .panel { padding: 0 5px 0 3px; }
.row .axes { margin-left: 73px; }
.combos { display: flex; gap: 2px; margin-left: -4px; background: #fff; height: 26px; }
.combo { display: flex; align-items: center; width: 70px; padding-right: 3px; }
.combo.floor { width: 58px; }
.combo select {
  appearance: none;
  flex: 1;
  min-width: 0;
  border: 0;
  padding: 0 0 0 2px;
  background: none;
  font: inherit;
  color: inherit;
}
.picked { margin-left: -4px; }
.face {
  display: flex;
  align-items: center;
  gap: 4px;
  height: 23px;
  padding: 0 3px;
  border: 1px solid #2a7fc0;
  background: #d9ebf9;
}
.picked::after { margin: 0 1px 0 -2px; }
.row .stub { width: 30px; margin-left: 2px; background: linear-gradient(90deg, #fff, #f0f0f0); }
.canvas { display: block; width: 100%; flex: 1; min-height: 0; background: #000; shape-rendering: crispEdges; }
.marks { font: 15px "Liberation Sans", sans-serif; text-anchor: middle; }
.dock { display: flex; gap: 98px; height: 4px; padding: 3px 0 0 59px; flex: none; background: #f8f8f8; }
.dock i { width: 150px; background: #0b7bd0; }
.dock i + i { width: 102px; }

/* floating window */
.float {
  position: absolute;
  top: 73px;
  right: 17px;
  width: 52px;
  background: #fff;
  box-shadow: 1px 3px 8px #0006;
}
.float header { display: flex; align-items: center; justify-content: space-between; height: 24px; padding: 0 1px 0 3px; color: #999; }
.float header button { width: 19px; height: 19px; background: #e6e6e6; color: #f8f8f8; }
.start { display: block; width: 100%; height: 24px; border: 1px solid #555; border-width: 1px 2px 2px 1px; background: #f0f0f0; }
```
